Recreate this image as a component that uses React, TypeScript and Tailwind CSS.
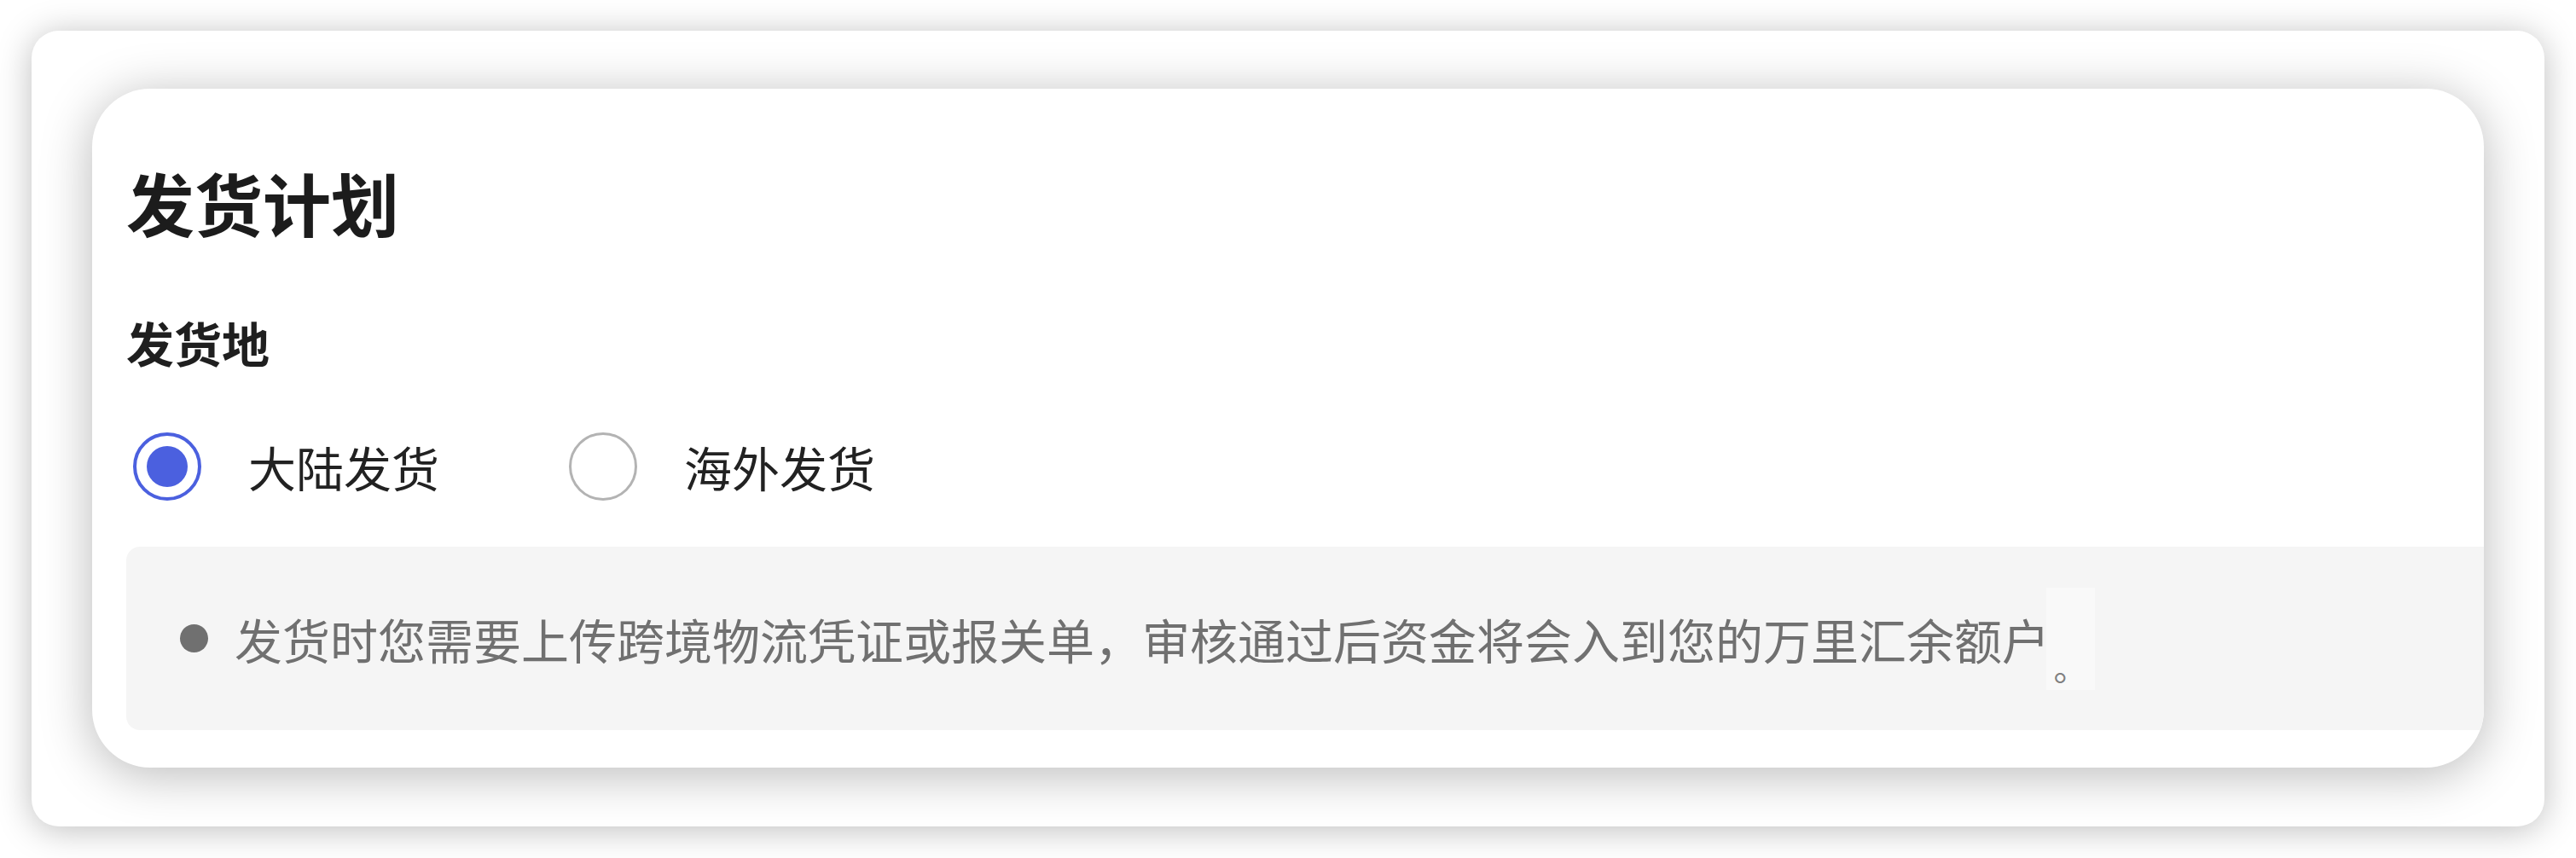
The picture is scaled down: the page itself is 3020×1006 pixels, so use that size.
import React from "react";

const font = {
  fontFamily: '"Noto Sans CJK SC", "Noto Sans", sans-serif',
};

function Radio({ checked }: { checked: boolean }) {
  return checked ? (
    <span className="flex h-[80px] w-[80px] shrink-0 items-center justify-center rounded-full border-[4px] border-[#4b60df] bg-white">
      <span className="block h-[48px] w-[48px] rounded-full bg-[#4b60df]" />
    </span>
  ) : (
    <span className="block h-[80px] w-[80px] shrink-0 rounded-full border-[3px] border-[#b3b3b3] bg-white" />
  );
}

export default function App() {
  return (
    <div className="h-[1006px] w-[3020px] overflow-hidden bg-white pl-[37px] pt-[36px]" style={font}>
      <div className="h-[933px] w-[2946px] rounded-[32px] bg-white pl-[71px] pt-[68px] shadow-[0_4px_40px_rgba(0,0,0,0.26)]">
        <div className="flex h-[796px] w-[2804px] flex-col overflow-hidden rounded-[68px] bg-white pl-[40px] pt-[92px] shadow-[0_8px_60px_rgba(0,0,0,0.28)]">
          <h1 className="text-[80px] font-bold leading-[80px] text-[#1c1c1c]">发货计划</h1>
          <div className="mt-[97px] text-[56px] font-semibold leading-[56px] text-[#1f1f1f]">发货地</div>
          <div className="mt-[78px] flex h-[80px] items-center">
            <label className="ml-[8px] flex items-center">
              <Radio checked />
              <span className="ml-[55px] text-[56px] leading-[56px] text-[#222222]">大陆发货</span>
            </label>
            <label className="ml-[152px] flex items-center">
              <Radio checked={false} />
              <span className="ml-[55px] text-[56px] leading-[56px] text-[#222222]">海外发货</span>
            </label>
          </div>
          <div className="mt-[54px] flex h-[215px] items-center rounded-l-[16px] bg-[#f5f5f5] pl-[63px]">
            <span className="block h-[33px] w-[33px] shrink-0 rounded-full bg-[#707070]" />
            <p className="ml-[31px] flex items-center text-[56px] leading-[56px] text-[#707070]">
              发货时您需要上传跨境物流凭证或报关单，审核通过后资金将会入到您的万里汇余额户
              <span className="ml-[-4px] flex h-[120px] w-[57px] items-end justify-center bg-[#f9f9f9] pb-[8px] text-[40px] leading-[40px] text-[#808080]">
                。
              </span>
            </p>
          </div>
        </div>
      </div>
    </div>
  );
}
